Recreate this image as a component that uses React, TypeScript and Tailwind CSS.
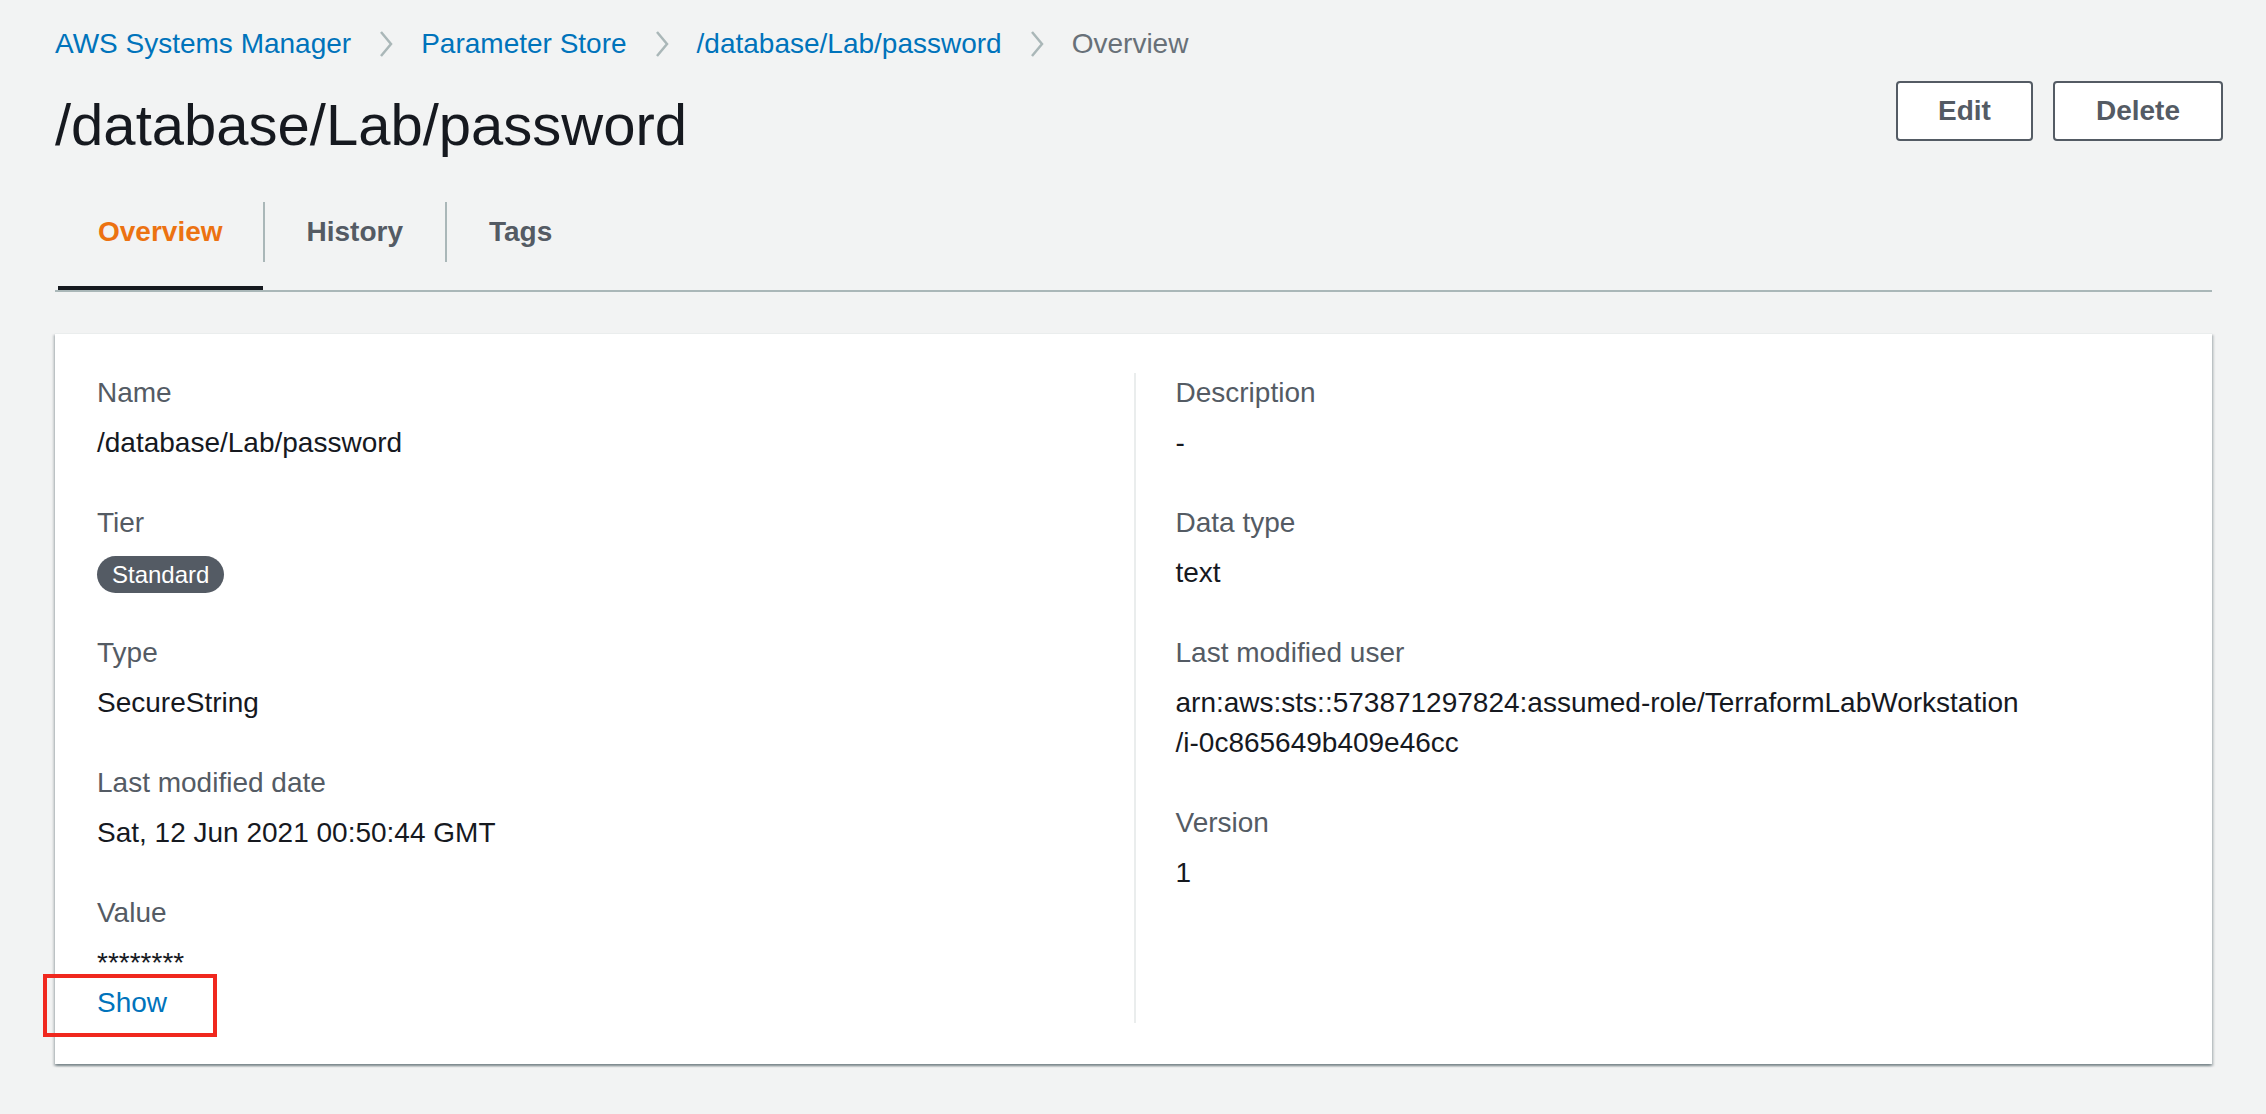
import React from 'react';

// AWS console: Parameter Store > parameter overview

function Chevron() {
  return (
    <svg width="20" height="28" viewBox="0 0 20 28" fill="none" className="mx-[25px] shrink-0">
      <path d="M5 2 L15 14 L5 26" stroke="#aab7b8" strokeWidth="2.5" />
    </svg>
  );
}

function Field({ label, children }: { label: string; children: React.ReactNode }) {
  return (
    <div>
      <div className="text-[#545b64] leading-[40px] mb-[10px]">{label}</div>
      <div className="text-[#16191f] leading-[40px]">{children}</div>
    </div>
  );
}

const tabs = [
  { name: 'Overview', active: true },
  { name: 'History', active: false },
  { name: 'Tags', active: false },
];

export default function App() {
  return (
    <div
      className="min-h-screen bg-[#f2f3f3] pl-[55px] pr-[54px] pt-[24px] text-[28px]"
      style={{ fontFamily: '"Liberation Sans", Arial, sans-serif' }}
    >
      {/* breadcrumbs */}
      <nav className="flex items-center h-[40px] leading-[40px]">
        <a className="text-[#0073bb]">AWS Systems Manager</a>
        <Chevron />
        <a className="text-[#0073bb]">Parameter Store</a>
        <Chevron />
        <a className="text-[#0073bb]">/database/Lab/password</a>
        <Chevron />
        <span className="text-[#687078]">Overview</span>
      </nav>

      {/* header */}
      <div className="mt-[17px] mr-[-11px] flex justify-between items-start">
        <h1 className="pt-[8px] text-[58px] leading-[72px] font-normal text-[#16191f]">/database/Lab/password</h1>
        <div className="flex gap-[20px]">
          <button className="h-[60px] px-[40px] border-2 border-[#545b64] rounded-[4px] bg-white font-bold text-[#545b64]">
            Edit
          </button>
          <button className="h-[60px] px-[41px] border-2 border-[#545b64] rounded-[4px] bg-white font-bold text-[#545b64]">
            Delete
          </button>
        </div>
      </div>

      {/* tabs */}
      <div className="mt-[41px] flex border-b-2 border-[#aab7b8] pl-[3px]">
        {tabs.map((t, i) => (
          <React.Fragment key={t.name}>
            {i > 0 && <div className="w-[2px] h-[60px] bg-[#aab7b8]" />}
            <div className="flex flex-col">
              <div
                className={`h-[60px] flex items-center font-bold ${
                  t.active ? 'px-[40px] text-[#ec7211]' : 'px-[42px] text-[#545b64]'
                }`}
              >
                {t.name}
              </div>
              <div className="h-[24px]" />
              <div className={`h-[4px] ${t.active ? 'bg-[#16191f]' : ''}`} />
            </div>
          </React.Fragment>
        ))}
      </div>

      {/* details card */}
      <div className="mt-[41px] bg-white border-t border-[#eaeded] px-[42px] pt-[39px] pb-[41px] shadow-[0_2px_2px_0_rgba(0,28,36,0.3),2px_2px_2px_0_rgba(0,28,36,0.15),-2px_2px_2px_0_rgba(0,28,36,0.15)]">
        <div className="grid grid-cols-2">
          <div className="flex flex-col gap-[40px]">
            <Field label="Name">/database/Lab/password</Field>
            <Field label="Tier">
              <span className="inline-flex items-center h-[37px] px-[15px] rounded-full bg-[#545b64] text-white text-[24px] leading-[37px] align-middle">
                Standard
              </span>
            </Field>
            <Field label="Type">SecureString</Field>
            <Field label="Last modified date">Sat, 12 Jun 2021 00:50:44 GMT</Field>
            <div>
              <div className="text-[#545b64] leading-[40px] mb-[10px]">Value</div>
              <div className="text-[#16191f] leading-[40px]">********</div>
              <div className="leading-[40px]">
                <span className="relative inline-block">
                  <a className="text-[#0073bb]">Show</a>
                  <span className="absolute left-[-54px] top-[-9px] w-[174px] h-[63px] border-[4px] border-[#f0281e]" />
                </span>
              </div>
            </div>
          </div>
          <div className="flex flex-col gap-[40px] border-l-2 border-[#eaeded] pl-[40px]">
            <Field label="Description">-</Field>
            <Field label="Data type">text</Field>
            <Field label="Last modified user">
              arn:aws:sts::573871297824:assumed-role/TerraformLabWorkstation
              <br />
              /i-0c865649b409e46cc
            </Field>
            <Field label="Version">1</Field>
          </div>
        </div>
      </div>
    </div>
  );
}
